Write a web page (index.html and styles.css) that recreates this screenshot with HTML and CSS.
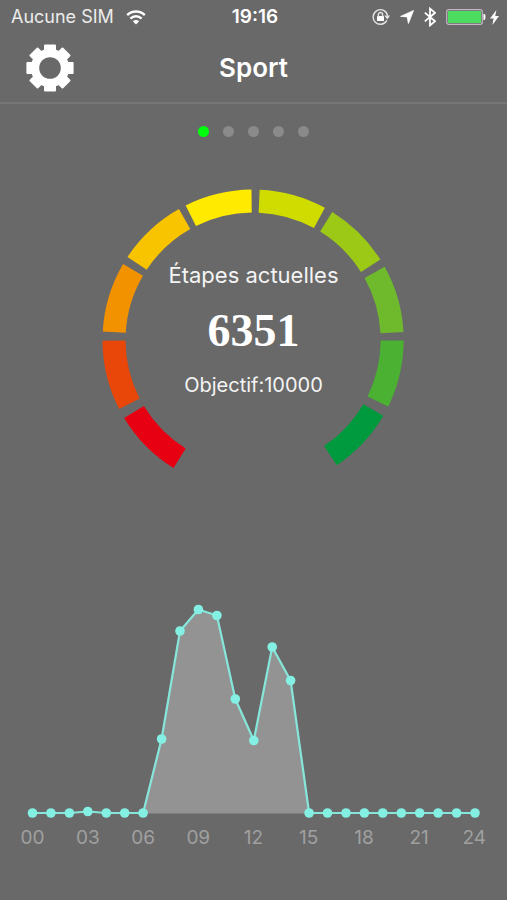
FILE: index.html
```html
<!DOCTYPE html>
<html lang="fr">
<head>
<meta charset="utf-8">
<meta name="viewport" content="width=device-width, initial-scale=1">
<title>Sport</title>
<link rel="stylesheet" href="styles.css">
</head>
<body>
<div class="status">
  <div class="status-left">
    <span>Aucune SIM</span>
    <svg width="20" height="15" viewBox="0 0 20 15" fill="none" stroke="#fff" stroke-width="2.4" aria-hidden="true">
      <path d="M1.2 5.2a12.4 12.4 0 0 1 17.6 0"/>
      <path d="M4.4 8.6a8 8 0 0 1 11.2 0"/>
      <path d="M10 14.4 6.8 11.2a4.6 4.6 0 0 1 6.4 0z" fill="#fff" stroke="none"/>
    </svg>
  </div>
  <div class="clock">19:16</div>
  <div class="status-right">
    <svg width="18" height="18" viewBox="0 0 18 18" fill="none" stroke="#e4e4e4" stroke-width="1.4" aria-hidden="true">
      <path d="M14.9 12.4A7.3 7.3 0 1 1 15.6 7.6"/>
      <path d="M12.4 7.6H18l-2.6 4z" fill="#e4e4e4" stroke="none"/>
      <rect x="5" y="8" width="7" height="5" rx=".6" fill="#fff" stroke="none"/>
      <path d="M6.4 8.4V6.6a2.1 2.1 0 0 1 4.2 0v1.8"/>
    </svg>
    <svg class="gap-before" width="14" height="14" viewBox="0 0 14 14" fill="#fff" stroke="#fff" stroke-width=".8" stroke-linejoin="round" aria-hidden="true"><path d="M13.500 .5 8.400 13.500 7.200 6.900.6 6.400z"/></svg>
    <svg class="gap-before" width="12" height="20" viewBox="0 0 12 20" fill="none" stroke="#fff" stroke-width="1.800" aria-hidden="true"><path d="M.8 5.6 11 14.2 6 18.4V1.6l5 4.2L.8 14.4"/></svg>
    <svg class="gap-before" width="40" height="16" viewBox="0 0 40 16" aria-hidden="true">
      <rect x=".7" y=".7" width="35.6" height="14.6" rx="2" fill="none" stroke="#c4b6c2" stroke-width="1.2"/>
      <rect x="2" y="2" width="33" height="12" rx=".6" fill="#4cdd60"/>
      <path d="M37.4 5h.6a1.4 1.4 0 0 1 1.4 1.4v3.2A1.4 1.4 0 0 1 38 11h-.6z" fill="#fff"/>
    </svg>
    <svg class="bolt" width="9" height="15" viewBox="0 0 9 15" fill="#fff" aria-hidden="true"><path d="M6.4 0 0 8.6h3.6L2.4 15 9 6H5.2z"/></svg>
  </div>
</div>

<header class="navbar">
  <button class="settings" type="button" aria-label="Réglages">
    <svg width="48" height="48" viewBox="-24 -24 48 48" aria-hidden="true">
      <defs><path id="tooth" d="M-6-16V-22.600Q-6-23.600-5-23.600H5Q6-23.600 6-22.600V-16z"/></defs>
      <g fill="#fff">
        <use href="#tooth"/><use href="#tooth" transform="rotate(45)"/><use href="#tooth" transform="rotate(90)"/><use href="#tooth" transform="rotate(135)"/>
        <use href="#tooth" transform="rotate(180)"/><use href="#tooth" transform="rotate(225)"/><use href="#tooth" transform="rotate(270)"/><use href="#tooth" transform="rotate(315)"/>
      </g>
      <circle r="15" fill="none" stroke="#fff" stroke-width="8.4"/>
    </svg>
  </button>
  <h1>Sport</h1>
</header>

<main>
  <div class="pager"><i class="on"></i><i></i><i></i><i></i><i></i></div>

  <section class="gauge">
    <svg class="ring" viewBox="-152 -152 304 284" fill="none" stroke-width="23" aria-hidden="true">
      <g class="arcs">
        <circle r="139" pathLength="360" stroke="#e60012" transform="rotate(121.9)"/>
        <circle r="139" pathLength="360" stroke="#e94609" transform="rotate(152.8)"/>
        <circle r="139" pathLength="360" stroke="#f39200" transform="rotate(183.3)"/>
        <circle r="139" pathLength="360" stroke="#f8c400" transform="rotate(213.5)"/>
        <circle class="short" r="139" pathLength="360" stroke="#ffea00" transform="rotate(243.4)"/>
        <circle class="short" r="139" pathLength="360" stroke="#d0dc00" transform="rotate(272.5)"/>
        <circle class="short" r="139" pathLength="360" stroke="#9bc915" transform="rotate(301.700)"/>
        <circle class="short" r="139" pathLength="360" stroke="#6fba2c" transform="rotate(330.900)"/>
        <circle class="short" r="139" pathLength="360" stroke="#4bb133" transform="rotate(.2)"/>
        <circle class="short" r="139" pathLength="360" stroke="#009a3e" transform="rotate(30.200)"/>
      </g>
    </svg>
    <div class="reading">
      <p class="caption">Étapes actuelles</p>
      <p class="steps">6351</p>
      <p class="goal">Objectif:10000</p>
    </div>
  </section>

  <section class="chart">
    <svg viewBox="0 600 507 220" aria-hidden="true">
      <path d="M143.1 813.5 161.6 739 180 631 198.4 609.500 216.900 615.500 235.300 699 253.800 740.500 272.200 647 290.600 680.500 309.100 813.500z" fill="#939393"/>
      <path class="dots-line" d="M32.500 813H69.400L87.800 811.500 106.300 813H143.100L161.600 739 180 631 198.400 609.500 216.900 615.500 235.300 699 253.800 740.500 272.200 647 290.600 680.500 309.100 813H475"/>
      <g fill="#84f0e3">
        <circle cx="32.500" cy="813" r="4.800"/><circle cx="50.900" cy="813" r="4.800"/><circle cx="69.400" cy="813" r="4.800"/><circle cx="87.800" cy="811.500" r="4.800"/><circle cx="106.300" cy="813" r="4.800"/>
        <circle cx="124.700" cy="813" r="4.800"/><circle cx="143.100" cy="813" r="4.800"/><circle cx="161.600" cy="739" r="4.800"/><circle cx="180" cy="631" r="4.800"/><circle cx="198.400" cy="609.500" r="4.800"/>
        <circle cx="216.900" cy="615.500" r="4.800"/><circle cx="235.300" cy="699" r="4.800"/><circle cx="253.800" cy="740.500" r="4.800"/><circle cx="272.200" cy="647" r="4.800"/><circle cx="290.600" cy="680.500" r="4.800"/>
        <circle cx="309.100" cy="813" r="4.800"/><circle cx="327.500" cy="813" r="4.800"/><circle cx="346" cy="813" r="4.800"/><circle cx="364.400" cy="813" r="4.800"/><circle cx="382.800" cy="813" r="4.800"/>
        <circle cx="401.300" cy="813" r="4.800"/><circle cx="419.700" cy="813" r="4.800"/><circle cx="438.100" cy="813" r="4.800"/><circle cx="456.600" cy="813" r="4.800"/><circle cx="475" cy="813" r="4.800"/>
      </g>
    </svg>
    <div class="hours"><span>00</span><span>03</span><span>06</span><span>09</span><span>12</span><span>15</span><span>18</span><span>21</span><span>24</span></div>
  </section>
</main>
</body>
</html>
```
FILE: styles.css
```css
* { box-sizing: border-box; }
body {
  margin: 0;
  min-height: 100vh;
  background: #696969;
  color: #fff;
  font-family: Inter, "Liberation Sans", sans-serif;
}
h1, p { margin: 0; }
svg { display: block; }

.status {
  display: grid;
  grid-template-columns: 1fr auto 1fr;
  align-items: center;
  height: 34px;
  padding: 0 8px 0 11px;
  font-size: 18px;
  line-height: 24px;
}
.status-left { display: flex; align-items: center; gap: 12px; color: #ececec; }
.clock { font-size: 19px; font-weight: 600; }
.status-right { display: flex; align-items: center; justify-content: flex-end; }
.gap-before { margin-left: 10px; }
.bolt { margin-left: 4px; }

.navbar {
  display: grid;
  grid-template-columns: 1fr auto 1fr;
  align-items: center;
  height: 70px;
  padding: 0 26px;
  border-bottom: 2px solid #767676;
}
.settings {
  justify-self: start;
  padding: 0;
  border: 0;
  background: none;
  cursor: pointer;
}
.navbar h1 { font-size: 26px; font-weight: 600; line-height: 32px; }

.pager { display: flex; justify-content: center; gap: 14px; padding-top: 22px; }
.pager i { width: 11px; height: 11px; border-radius: 50%; background: #8a8a8a; }
.pager .on { background: #00ff0c; }

.gauge { display: grid; width: 60%; margin: 51px auto 0; }
.ring, .reading { grid-area: 1 / 1; }
.ring { width: 100%; }
.arcs circle { stroke-dasharray: 27 333; }
.arcs .short { stroke-dasharray: 26 334; }
.reading { padding-top: 73px; text-align: center; }
.caption { font-size: 22px; line-height: 28px; color: #f4f4f4; }
.steps {
  margin: 14px 0 12px;
  font: bold 46px/56px "Liberation Serif", serif;
}
.goal { font-size: 20px; line-height: 28px; color: #f4f4f4; }

.chart { margin-top: 128px; }
.chart svg { width: 100%; }
.dots-line { fill: none; stroke: #86e6d9; stroke-width: 2.2; stroke-linejoin: round; }
.hours {
  display: grid;
  grid-template-columns: repeat(9, 1fr);
  padding: 6px 5px 0;
  font-size: 19px;
  line-height: 24px;
  text-align: center;
  color: #a0a0a0;
}
```
